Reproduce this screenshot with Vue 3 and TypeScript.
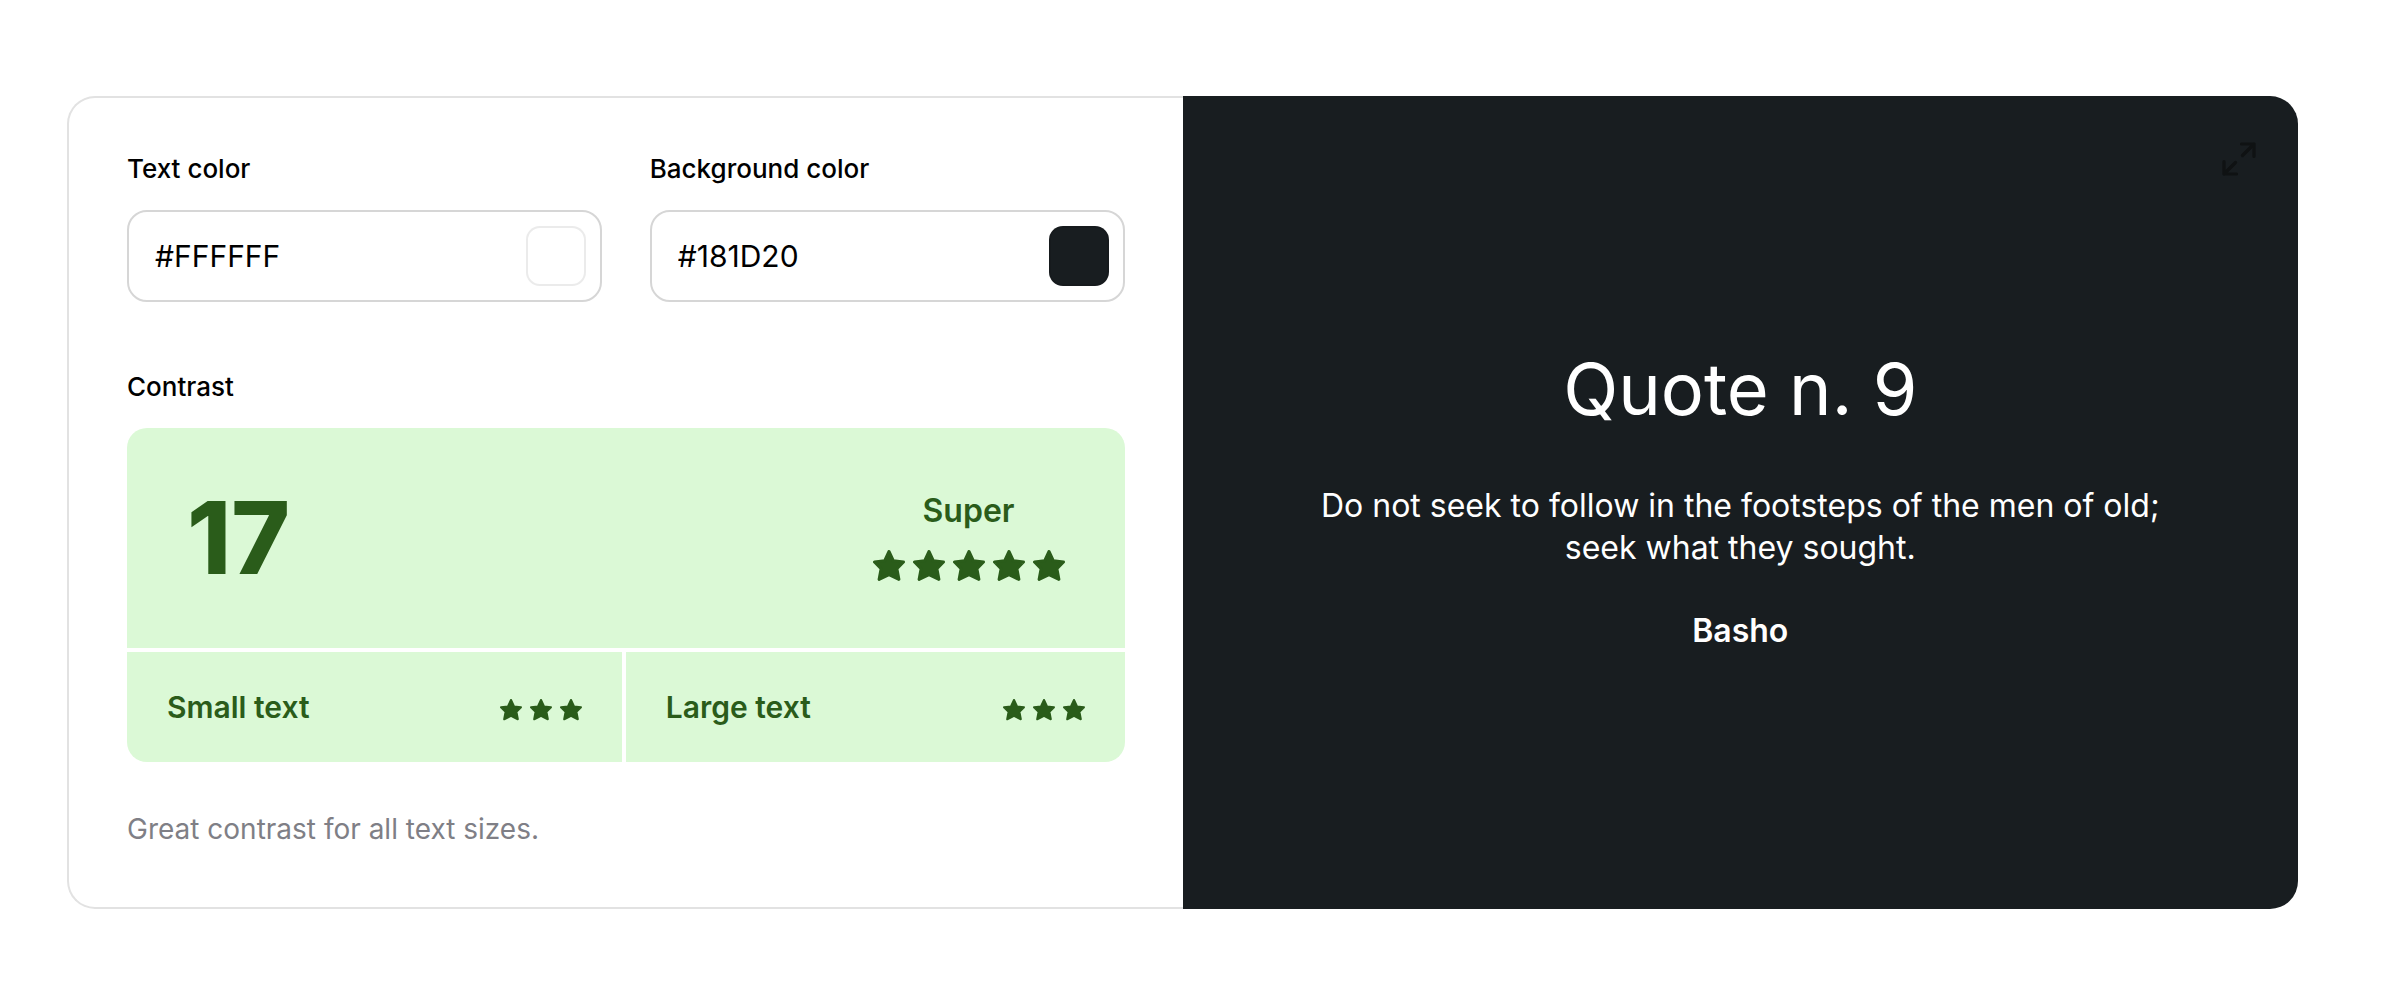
<script setup lang="ts">
import { computed, ref } from 'vue'

const textColor = ref('#FFFFFF')
const backgroundColor = ref('#181D20')

const fields = [
  { id: 'text-color', label: 'Text color', model: textColor },
  { id: 'background-color', label: 'Background color', model: backgroundColor },
]

const sizes = ['Small text', 'Large text']

function luminance(hex: string): number {
  const [r, g, b] = [1, 3, 5].map((start) => {
    const channel = parseInt(hex.slice(start, start + 2), 16) / 255
    return channel <= 0.03928 ? channel / 12.92 : ((channel + 0.055) / 1.055) ** 2.4
  })
  return 0.2126 * r + 0.7152 * g + 0.0722 * b
}

const ratio = computed(() => {
  const a = luminance(textColor.value)
  const b = luminance(backgroundColor.value)
  const value = (Math.max(a, b) + 0.05) / (Math.min(a, b) + 0.05)
  return Math.round(value * 10) / 10
})

function update(index: number, event: Event) {
  const value = (event.target as HTMLInputElement).value.toUpperCase()
  if (/^#[0-9A-F]{6}$/.test(value)) fields[index].model.value = value
}
</script>

<template>
  <main class="page">
    <div class="card">
      <section class="controls">
        <div class="fields">
          <div v-for="(field, i) in fields" :key="field.id" class="field">
            <label class="label" :for="field.id">{{ field.label }}</label>
            <div class="box">
              <input
                :id="field.id"
                class="hex"
                type="text"
                spellcheck="false"
                :value="field.model.value"
                @change="update(i, $event)"
              />
              <input
                class="swatch"
                type="color"
                :aria-label="field.label"
                :value="field.model.value.toLowerCase()"
                @input="update(i, $event)"
              />
            </div>
          </div>
        </div>

        <h2 class="label contrast-label">Contrast</h2>
        <div class="result">
          <div class="overall">
            <strong class="ratio">{{ ratio }}</strong>
            <div class="verdict">
              <span class="verdict-text">Super</span>
              <div class="stars">
                <svg v-for="n in 5" :key="n" class="star" viewBox="0 0 32 32" aria-hidden="true">
                  <path d="M16 1.5 L20.4 10.8 L30.5 12 L23.9 18.7 L25.9 29.4 L16 24.6 L6.1 29.4 L8.1 18.7 L1.5 12 L11.6 10.8Z" />
                </svg>
              </div>
            </div>
          </div>
          <div class="sizes">
            <div v-for="size in sizes" :key="size" class="size">
              <span>{{ size }}</span>
              <div class="stars small">
                <svg v-for="n in 3" :key="n" class="star" viewBox="0 0 32 32" aria-hidden="true">
                  <path d="M16 1.5 L20.4 10.8 L30.5 12 L23.9 18.7 L25.9 29.4 L16 24.6 L6.1 29.4 L8.1 18.7 L1.5 12 L11.6 10.8Z" />
                </svg>
              </div>
            </div>
          </div>
        </div>

        <p class="note">Great contrast for all text sizes.</p>
      </section>

      <section class="preview" :style="{ color: textColor, backgroundColor }">
        <button class="expand" type="button" aria-label="Expand preview">
          <svg viewBox="0 0 34 34" aria-hidden="true">
            <path d="M19.5 2H32V14.5 M32 2L20.5 13.5 M14.5 32H2V19.5 M2 32L13.5 20.5" />
          </svg>
        </button>
        <h1 class="title">Quote n. 9</h1>
        <p class="quote">Do not seek to follow in the footsteps of the men of old; seek what they sought.</p>
        <p class="author">Basho</p>
      </section>
    </div>
  </main>
</template>

<style>
body {
  margin: 0;
  background: #fff;
}
</style>

<style scoped>
.page {
  padding: 96px 110px 96px 67px;
  font-family: Inter, "Liberation Sans", sans-serif;
  color: #000;
}

.page * {
  box-sizing: border-box;
}

.card {
  display: grid;
  grid-template-columns: repeat(2, minmax(0, 1fr));
}

.controls {
  padding: 54px 58px 58px;
  border: 2px solid #e2e2e2;
  border-right: 0;
  border-radius: 28px 0 0 28px;
}

.fields {
  display: grid;
  grid-template-columns: repeat(2, minmax(0, 1fr));
  gap: 48px;
}

.label {
  display: block;
  margin: 0 0 24px;
  font-size: 26px;
  line-height: 34px;
  font-weight: 500;
}

.box {
  display: flex;
  align-items: center;
  padding: 14px 14px 14px 26px;
  border: 2px solid #d6d6d6;
  border-radius: 20px;
}

.hex {
  flex: 1;
  min-width: 0;
  padding: 0;
  border: 0;
  outline: 0;
  background: none;
  color: inherit;
  font: 400 30px/40px Inter, "Liberation Sans", sans-serif;
}

.swatch {
  appearance: none;
  width: 60px;
  height: 60px;
  padding: 0;
  border: 0;
  background: none;
  cursor: pointer;
}

.swatch::-webkit-color-swatch-wrapper {
  padding: 0;
}

.swatch::-webkit-color-swatch {
  border: 2px solid rgba(0, 0, 0, 0.08);
  border-radius: 14px;
}

.contrast-label {
  margin-top: 68px;
}

.result {
  display: flex;
  flex-direction: column;
  gap: 4px;
  overflow: hidden;
  border-radius: 20px;
  color: #2a5c1a;
}

.overall {
  display: flex;
  align-items: center;
  justify-content: space-between;
  height: 220px;
  padding: 0 60px;
  background: #dbf9d6;
}

.ratio {
  font-size: 100px;
  line-height: 100px;
  font-weight: 800;
}

.verdict {
  display: flex;
  flex-direction: column;
  align-items: center;
  gap: 22px;
}

.verdict-text {
  font-size: 32px;
  line-height: 34px;
  font-weight: 600;
}

.stars {
  display: flex;
  gap: 8px;
}

.star {
  display: block;
  width: 32px;
  height: 32px;
  fill: currentColor;
  stroke: currentColor;
  stroke-width: 3;
  stroke-linejoin: round;
}

.small {
  padding-top: 6px;
}

.small .star {
  width: 22px;
  height: 22px;
}

.sizes {
  display: grid;
  grid-template-columns: repeat(2, minmax(0, 1fr));
}

.size {
  display: flex;
  align-items: center;
  justify-content: space-between;
  height: 110px;
  padding: 0 40px;
  background: #dbf9d6;
  font-size: 30px;
  line-height: 40px;
  font-weight: 600;
}

.size:first-child {
  border-right: 4px solid #fff;
}

.note {
  margin: 47px 0 0;
  color: #7f7f86;
  font-size: 28px;
  line-height: 40px;
}

.preview {
  position: relative;
  display: flex;
  flex-direction: column;
  align-items: center;
  justify-content: center;
  padding: 58px;
  border-radius: 0 28px 28px 0;
  text-align: center;
}

.expand {
  position: absolute;
  top: 46px;
  right: 42px;
  padding: 0;
  border: 0;
  background: none;
  color: #0f1213;
  cursor: pointer;
}

.expand svg {
  display: block;
  width: 34px;
  height: 34px;
  fill: none;
  stroke: currentColor;
  stroke-width: 3.2;
  stroke-linecap: round;
  stroke-linejoin: round;
}

.title {
  margin: 0 0 60px;
  font-size: 72px;
  line-height: 72px;
  font-weight: 400;
}

.quote {
  max-width: 880px;
  margin: 0 0 41px;
  font-size: 32px;
  line-height: 42px;
}

.author {
  margin: 0;
  font-size: 32px;
  line-height: 42px;
  font-weight: 600;
}
</style>
